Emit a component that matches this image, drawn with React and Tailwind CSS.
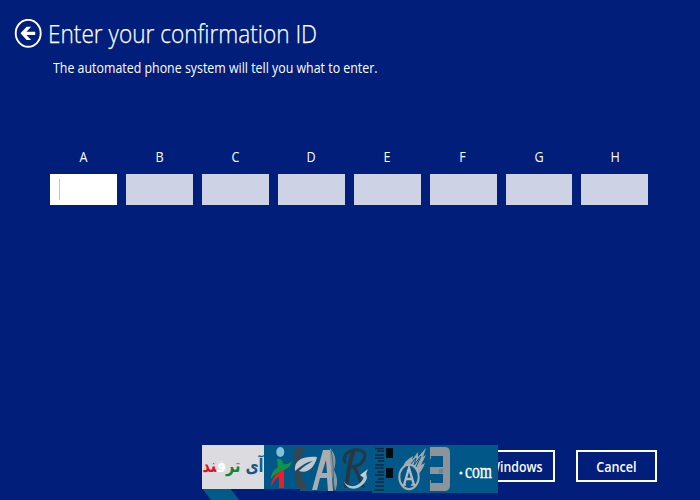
const letters = ["A", "B", "C", "D", "E", "F", "G", "H"];

function BackIcon() {
  return (
    <svg className="h-[30px] w-[28px] shrink-0" viewBox="0 0 28 30" fill="none">
      <ellipse cx="14.2" cy="14.3" rx="12.5" ry="13.5" stroke="#fff" strokeWidth="1.9" />
      <path d="M6.5 14.3 12.6 7.7h4.6l-4.7 5h8.7v3.2h-8.7l4.7 5h-4.6z" fill="#fff" />
    </svg>
  );
}

function Watermark() {
  return (
    <svg className="absolute left-[202px] top-[445px] h-[55px] w-[296px]" viewBox="0 0 296 55">
      <path d="M0 43H28L37 55H9z" fill="#005b88" />
      <path d="M62 0H296V48H170V46H98V44H62z" fill="#005788" />
      <path d="M0 0H62V44H0z" fill="#dcdce0" />
      <text x="61.5" y="27" direction="rtl" fontFamily="'DejaVu Sans', sans-serif" fontWeight="700" fontSize="18" textLength="61" lengthAdjust="spacingAndGlyphs">
        <tspan fill="#14588c">آی </tspan>
        <tspan fill="#16833a">تر</tspan>
        <tspan fill="#fff">ف</tspan>
        <tspan fill="#da1220">ند</tspan>
      </text>

      <ellipse cx="78.3" cy="7" rx="4" ry="5" fill="#86bfdb" />
      <path d="M75 14c4-1 6 2 6 5 4 1 7-1 9-3-1 6-6 8-10 10-5 2-8 4-11 8 0-6 3-9 7-12z" fill="#109548" />
      <path d="M82 24v19h-5V32c-3 1-6 5-8 10 0-9 6-14 13-18z" fill="#ef1c22" />

      <path d="M93 3h10c-4 5-5 9-5 17 0 10 3 17 8 24H97c-5-9-5-31-4-41z" fill="#39454d" />
      <path d="M93 26c-1-10 6-15 22-14-2 10-9 17-18 14 5-5 9-7 14-10-7 1-12 5-18 10z" fill="#c4c8cb" />
      <path d="M121 5h7l3 41h-5l-1-13h-7l-3 12h-5zM124 15l-4 13h5z" fill="#a9adb0" fillRule="evenodd" />
      <path d="M128 3c7 8 6 15 4 22 4 8 4 15 1 21-2-12-6-28-5-43z" fill="#8999a3" />
      <path d="M129 5c3 14 2 28 3 40" fill="none" stroke="#465b68" strokeWidth=".8" />

      <g fill="none" stroke="#283640" strokeLinecap="round">
        <path d="M151 8c-4 8-4 20-7 33" strokeWidth="4" />
        <path d="M143 17c-3-7 5-13 14-12 10 1 7 14-6 17 5 2 5 12 10 19" strokeWidth="3" />
      </g>
      <path d="M142 36c3 7 15 8 20-4l2-5 1 6c-4 12-20 15-23 3z" fill="#b3c7d2" />
      <path d="M158 30l8-6-4 9z" fill="#c8ced2" />

      <path d="M184 3h7v10h-7zM184 23h7v10h-7z" fill="#000b10" />
      <path d="M173 3.5h9M175 6h7M173 10h9M173 13h9M176 16h6M173 20h9M173 23h9M175 27h7M173 30h9M176 34h6M173 37h9M173 41h9M172 45h10" stroke="#102a38" strokeWidth="1.3" />

      <path d="M201 23c1-6 4-8 10-12l-1 4 6-8v5l8-9-3 9 3-2-5 10 4-2c-2 6-5 9-8 14l-5-7z" fill="#a0a8ad" />
      <path d="m208 20 6-7-2 7 7-9-5 11" fill="none" stroke="#005788" strokeWidth="1" />
      <ellipse cx="207" cy="32" rx="9.7" ry="12.2" fill="#005788" stroke="#aaadb0" strokeWidth="2" />
      <path d="m202 40 5-17 5 17M203 34h7" fill="none" stroke="#b4bbc0" strokeWidth="2.3" />
      <path d="M200 40h4m5 0h5" stroke="#b4bbc0" strokeWidth="1.4" />

      <path d="M228 2h15c4 0 5 3 5 6v32c0 4-2 6-6 6h-14V35h1v3h12V29h-13V22h13V11h-12v3h-1z" fill="#8c949a" />
      <path d="M238 24v4m2-4v4" stroke="#4b6779" strokeWidth=".8" />
      <circle cx="259" cy="28" r="1.6" fill="#fff" />
      <text x="263" y="33" fill="#fff" fontFamily="'Liberation Serif', serif" fontSize="22" fontWeight="400" stroke="#fff" strokeWidth=".35" textLength="27" lengthAdjust="spacingAndGlyphs">com</text>
    </svg>
  );
}

export default function App() {
  return (
    <main className="relative flex h-[500px] w-[700px] flex-col overflow-hidden bg-[#001e7a] font-['Open_Sans','Noto_Sans',sans-serif] text-white">
      <header className="flex h-[52px] items-start pl-[14px] pt-[19px]">
        <BackIcon />
        <h1 className="ml-[6px] -mt-[4px] origin-left scale-x-[0.87] whitespace-nowrap text-[26px] font-light leading-[36px] [-webkit-text-stroke:0.25px_white]">
          Enter your confirmation ID
        </h1>
      </header>
      <p className="ml-[53px] mt-[5px] origin-left scale-x-[0.885] whitespace-nowrap text-[14px] leading-[22px]">
        The automated phone system will tell you what to enter.
      </p>

      <div className="ml-[50.3px] mt-[68px] grid w-[598px] grid-cols-8 gap-x-[9px]">
        {letters.map((letter, index) => (
          <label key={letter} className="flex flex-col items-center">
            <span className="h-[27px] scale-x-90 text-[14px] leading-[20px]">{letter}</span>
            <span className={index === 0 ? "flex h-[31px] w-full items-center bg-white pl-[9px]" : "h-[31px] w-full bg-[#ced2e5]"}>
              {index === 0 && <span className="h-[21px] w-px bg-[#c3c6cc]" />}
            </span>
          </label>
        ))}
      </div>

      <footer className="mb-[18px] mr-[43px] mt-auto flex justify-end gap-[21px] text-[14px] font-semibold leading-none">
        <button className="flex h-[32px] w-[120px] items-center justify-end border-2 border-white pr-[10px]">
          <span className="relative top-px origin-right scale-x-[0.88] whitespace-nowrap">Windows</span>
        </button>
        <button className="flex h-[32px] w-[81px] items-center justify-center border-2 border-white">
          <span className="relative top-px scale-x-[0.9]">Cancel</span>
        </button>
      </footer>
      <Watermark />
    </main>
  );
}
